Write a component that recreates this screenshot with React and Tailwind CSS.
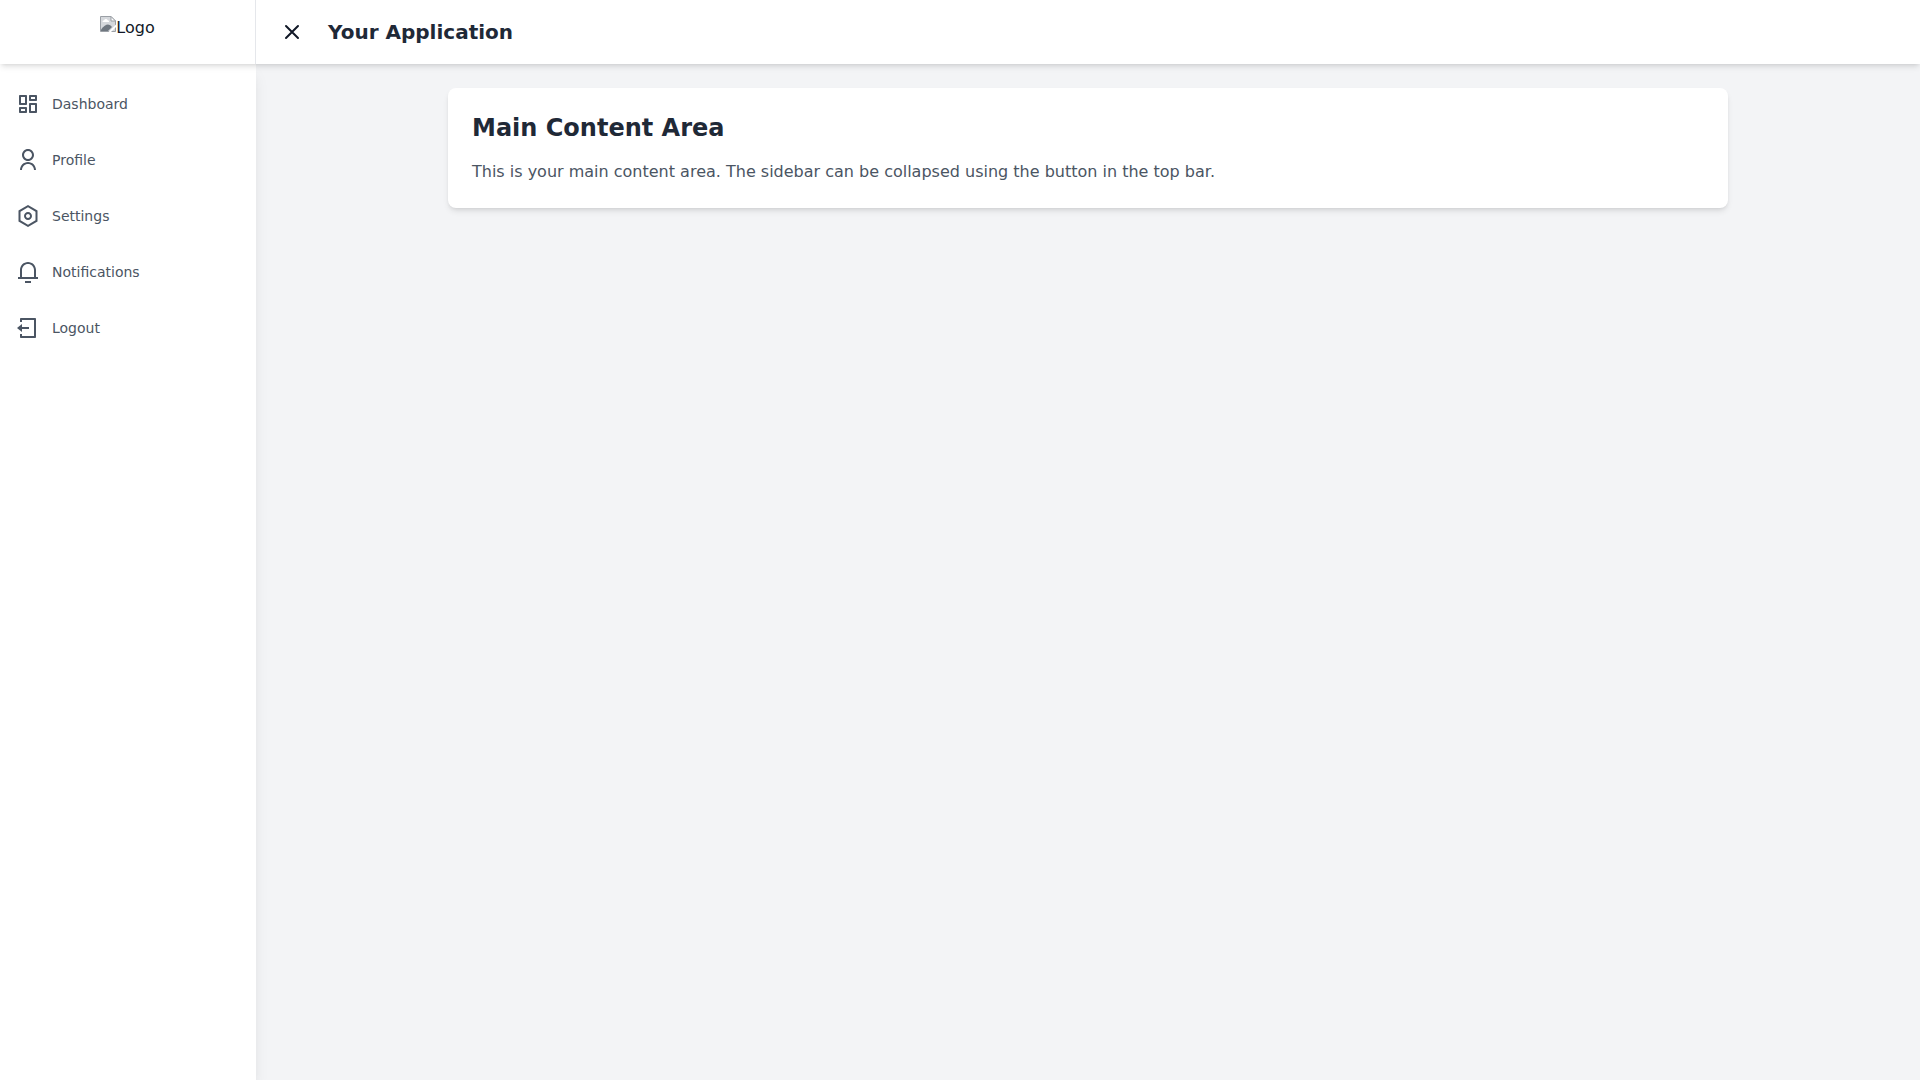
import { useState } from "react";
import {
  RiDashboardLine,
  RiLogoutBoxLine,
  RiNotification3Line,
  RiSettingsLine,
  RiUserLine,
} from "react-icons/ri";

const items = [
  { label: "Dashboard", Icon: RiDashboardLine },
  { label: "Profile", Icon: RiUserLine },
  { label: "Settings", Icon: RiSettingsLine },
  { label: "Notifications", Icon: RiNotification3Line },
  { label: "Logout", Icon: RiLogoutBoxLine },
];

function Logo() {
  return (
    <div className="flex h-8 items-start">
      <svg className="size-4" viewBox="0 0 16 16" aria-hidden="true">
        <path d="M0.5 0.5H11L15.5 5V15.5H0.5Z" fill="#d5d8dc" stroke="#9a9fa5" />
        <path d="M2.5 6a1.6 1.6 0 0 1 1.6-1.8a2 2 0 0 1 3.6 0a1.4 1.4 0 0 1 1.3 1.8Z" fill="#fff" />
        <path d="M1 15V13.5Q5 8.5 8 8.5Q10.500 8.500 12 11L8 15Z" fill="#6f7780" />
        <path d="M11 0.5V5H15.5Z" fill="#fff" stroke="#9a9fa5" />
        <path d="M16 8.5L8.5 16H11L16 11Z" fill="#fff" />
      </svg>
      <span className="leading-6">Logo</span>
    </div>
  );
}

export default function App() {
  const [open, setOpen] = useState(true);

  return (
    <div className="flex min-h-screen flex-col bg-[#f3f4f6] font-['DejaVu_Sans',sans-serif] text-[#111827]">
      <header className="relative z-20 flex h-16 bg-white shadow-md">
        <div className="flex w-64 items-center justify-center border-r border-[#e5e7eb]">
          <Logo />
        </div>
        <div className="flex flex-1 items-center gap-4 px-4">
          <button
            type="button"
            aria-label="Toggle sidebar"
            aria-expanded={open}
            onClick={() => setOpen(!open)}
            className="rounded-md p-2"
          >
            <svg
              className="size-6"
              viewBox="0 0 24 24"
              fill="none"
              stroke="currentColor"
              strokeWidth="2"
              strokeLinecap="round"
              strokeLinejoin="round"
              aria-hidden="true"
            >
              <path d={open ? "M6 18L18 6M6 6l12 12" : "M4 6h16M4 12h16M4 18h16"} />
            </svg>
          </button>
          <h1 className="text-xl font-bold text-[#1f2937]">Your Application</h1>
        </div>
      </header>

      <div className="flex flex-1">
        {open && (
          <aside className="relative z-10 w-64 bg-white shadow-lg">
            <nav className="flex flex-col gap-2 py-4">
              {items.map(({ label, Icon }) => (
                <a
                  key={label}
                  href="#"
                  className="flex h-12 items-center gap-3 px-4 text-sm text-[#4b5563] hover:bg-gray-100"
                >
                  <Icon className="size-6" />
                  {label}
                </a>
              ))}
            </nav>
          </aside>
        )}
        <main className="flex-1 p-6">
          <section className="mx-auto max-w-7xl rounded-lg bg-white p-6 shadow-md">
            <h2 className="mb-4 text-2xl leading-8 font-bold text-[#1f2937]">Main Content Area</h2>
            <p className="text-[#4b5563]">
              This is your main content area. The sidebar can be collapsed using the button in the top bar.
            </p>
          </section>
        </main>
      </div>
    </div>
  );
}
